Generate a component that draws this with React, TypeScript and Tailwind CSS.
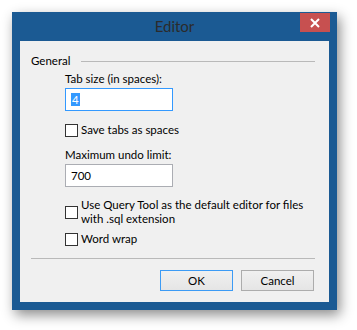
import React from "react";

function Checkbox({ label }: { label: React.ReactNode }) {
  return (
    <div className="flex items-center">
      <div className="w-[13px] h-[13px] shrink-0 border border-[#333333] bg-white" />
      <div className="ml-[3px] leading-[14px] whitespace-nowrap">{label}</div>
    </div>
  );
}

export default function App() {
  return (
    <div className="w-[357px] h-[330px] bg-white pl-[12px] pt-[12px] font-['Lato',sans-serif] overflow-hidden">
      <div className="w-[325px] h-[298px] bg-[#1b5a93] flex flex-col shadow-[3px_5px_12px_rgba(0,0,0,0.45)]">
        <div className="relative h-[29px] shrink-0 flex items-center justify-center text-[15px] text-[#2b2b2b]">
          Editor
          <div className="absolute right-[7px] top-[1px] w-[30px] h-[19px] bg-[#c75050] flex items-center justify-center">
            <svg width="10" height="10" viewBox="0 0 10 10">
              <path d="M1 1 L9 9 M9 1 L1 9" stroke="white" strokeWidth="2" />
            </svg>
          </div>
        </div>
        <div className="mx-[8px] mb-[8px] flex-1 bg-[#f0f0f0] text-[11.5px] text-black pl-[11px] pr-[14px] pt-[12px] flex flex-col">
          <div className="flex items-center leading-[16px]">
            <span>General</span>
            <div className="flex-1 h-px bg-[#b9b9b9] ml-[11px]" />
          </div>
          <div className="pl-[34px] flex flex-col">
            <div className="mt-[2px] leading-[16px]">Tab size (in spaces):</div>
            <div className="mt-[1px] w-[108px] h-[23px] border border-[#3399ff] bg-white flex items-center pl-[5px]">
              <span className="bg-[#3399ff] text-white leading-[13px] px-px">4</span>
            </div>
            <div className="mt-[12px]">
              <Checkbox label="Save tabs as spaces" />
            </div>
            <div className="mt-[10px] leading-[16px]">Maximum undo limit:</div>
            <div className="mt-px w-[108px] h-[23px] border border-[#abadb3] bg-white flex items-center pl-[5px]">
              700
            </div>
            <div className="mt-[11px]">
              <Checkbox
                label={
                  <>
                    Use Query Tool as the default editor for files
                    <br />
                    with .sql extension
                  </>
                }
              />
            </div>
            <div className="mt-[6px]">
              <Checkbox label="Word wrap" />
            </div>
          </div>
          <div className="mt-[12px] h-px bg-[#b9b9b9]" />
          <div className="mt-[11px] flex justify-end gap-[8px] pr-px">
            <button className="w-[73px] h-[21px] border border-[#3c9bf5] bg-gradient-to-b from-[#f0f0f0] to-[#e5e5e5] leading-[14px]">
              OK
            </button>
            <button className="w-[73px] h-[21px] border border-[#acacac] bg-gradient-to-b from-[#f0f0f0] to-[#e5e5e5] leading-[14px]">
              Cancel
            </button>
          </div>
        </div>
      </div>
    </div>
  );
}
